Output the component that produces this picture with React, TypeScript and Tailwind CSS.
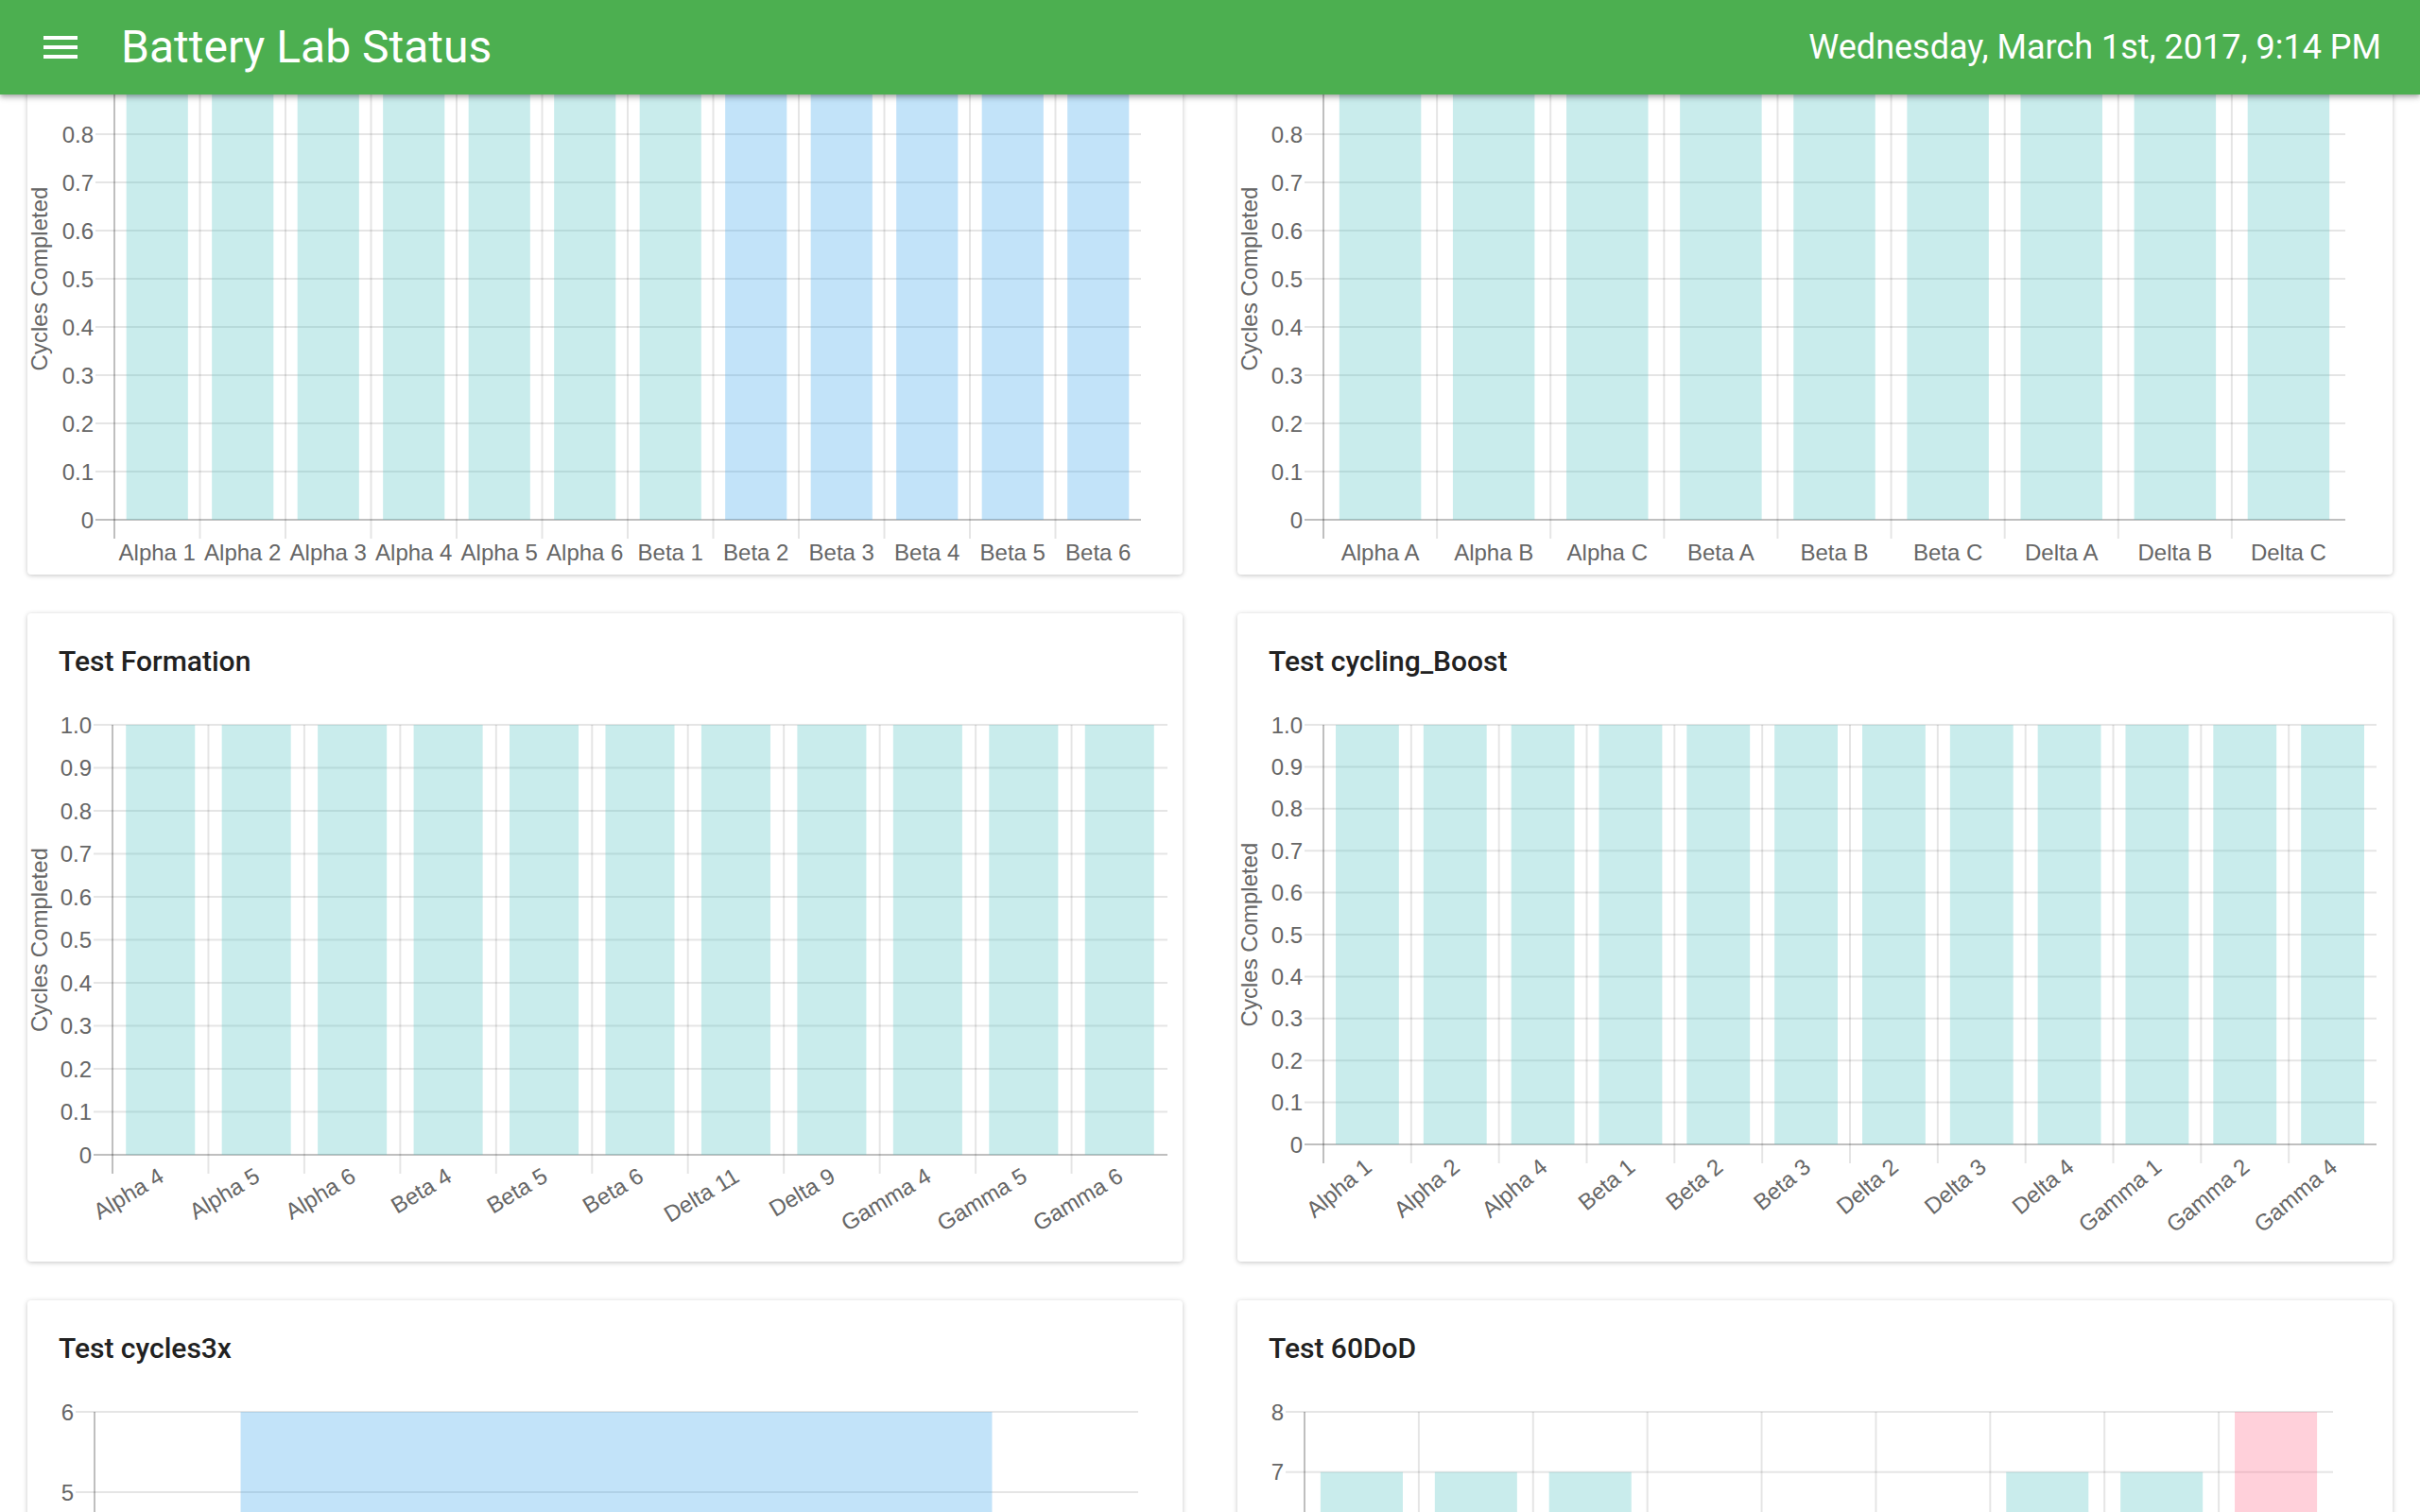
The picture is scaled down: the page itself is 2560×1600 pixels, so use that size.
import { useLayoutEffect, useRef } from "react";

const TEAL = "rgba(75,192,192,0.3)";
const BLUE = "rgba(54,162,235,0.3)";
const PINK = "rgba(255,99,132,0.3)";

const TITLE_H = 69;
const CARD_W = 1222;
const CARD_H = 686;

type Bar = { label: string; value: number; color: string };

type ChartSpec = {
  title: string;
  axisX: number;
  right: number;
  top: number;
  zero: number;
  max: number;
  step: number;
  decimals: number;
  rotate?: number;
  bars: Bar[];
};

const bars = (labels: string[], color: (i: number) => string, value: (i: number) => number = () => 1) =>
  labels.map((label, i) => ({ label, value: value(i), color: color(i) }));

const charts: ChartSpec[] = [
  {
    title: "Test cycling",
    axisX: 92,
    right: 1178,
    top: 118,
    zero: 628,
    max: 1,
    step: 0.1,
    decimals: 1,
    bars: bars(
      ["Alpha 1", "Alpha 2", "Alpha 3", "Alpha 4", "Alpha 5", "Alpha 6", "Beta 1", "Beta 2", "Beta 3", "Beta 4", "Beta 5", "Beta 6"],
      (i) => (i < 7 ? TEAL : BLUE)
    ),
  },
  {
    title: "Test storage",
    axisX: 91,
    right: 1172,
    top: 118,
    zero: 628,
    max: 1,
    step: 0.1,
    decimals: 1,
    bars: bars(
      ["Alpha A", "Alpha B", "Alpha C", "Beta A", "Beta B", "Beta C", "Delta A", "Delta B", "Delta C"],
      () => TEAL
    ),
  },
  {
    title: "Test Formation",
    axisX: 90,
    right: 1206,
    top: 118,
    zero: 573,
    max: 1,
    step: 0.1,
    decimals: 1,
    rotate: 31,
    bars: bars(
      ["Alpha 4", "Alpha 5", "Alpha 6", "Beta 4", "Beta 5", "Beta 6", "Delta 11", "Delta 9", "Gamma 4", "Gamma 5", "Gamma 6"],
      () => TEAL
    ),
  },
  {
    title: "Test cycling_Boost",
    axisX: 91,
    right: 1205,
    top: 118,
    zero: 562,
    max: 1,
    step: 0.1,
    decimals: 1,
    rotate: 40,
    bars: bars(
      ["Alpha 1", "Alpha 2", "Alpha 4", "Beta 1", "Beta 2", "Beta 3", "Delta 2", "Delta 3", "Delta 4", "Gamma 1", "Gamma 2", "Gamma 4"],
      () => TEAL
    ),
  },
  {
    title: "Test cycles3x",
    axisX: 71,
    right: 1175,
    top: 118,
    zero: 628,
    max: 6,
    step: 1,
    decimals: 0,
    bars: [{ label: "Beta 2", value: 6, color: BLUE }],
  },
  {
    title: "Test 60DoD",
    axisX: 71,
    right: 1159,
    top: 118,
    zero: 628,
    max: 8,
    step: 1,
    decimals: 0,
    bars: bars(
      ["Alpha 1", "Alpha 2", "Alpha 3", "Beta 1", "Beta 2", "Beta 3", "Delta 1", "Delta 2", "Gamma 1"],
      (i) => (i === 8 ? PINK : TEAL),
      (i) => [7, 7, 7, 5, 4, 5, 7, 7, 8][i]
    ),
  },
];

function BarChart({ c }: { c: ChartSpec }) {
  const n = c.bars.length;
  const cw = (c.right - c.axisX) / n;
  const steps = Math.round(c.max / c.step);
  const top = c.top - TITLE_H;
  const zero = c.zero - TITLE_H;
  const y = (v: number) => zero - (v / c.max) * (zero - top);
  const fmt = (i: number) => (i === 0 ? "0" : (i * c.step).toFixed(c.decimals));

  return (
    <svg
      width={CARD_W}
      height={CARD_H - TITLE_H}
      className="block shrink-0"
      fontFamily="'Liberation Sans', Arial, sans-serif"
      fontSize={24}
      fill="#666"
    >
      {/* horizontal grid + y ticks */}
      {Array.from({ length: steps + 1 }, (_, i) => {
        const yy = y(i * c.step);
        return (
          <g key={`h${i}`}>
            <line
              x1={c.axisX - 20}
              x2={c.right}
              y1={yy}
              y2={yy}
              stroke={i === 0 ? "rgba(0,0,0,0.25)" : "rgba(0,0,0,0.1)"}
              strokeWidth={2}
            />
            <text x={c.axisX - 22} y={yy + 8.5} textAnchor="end">
              {fmt(i)}
            </text>
          </g>
        );
      })}

      {/* vertical grid at category edges */}
      {c.bars.map((_, i) => (
        <line
          key={`v${i}`}
          x1={c.axisX + i * cw}
          x2={c.axisX + i * cw}
          y1={top}
          y2={zero + 20}
          stroke={i === 0 ? "rgba(0,0,0,0.25)" : "rgba(0,0,0,0.1)"}
          strokeWidth={2}
        />
      ))}

      {/* bars */}
      {c.bars.map((b, i) => (
        <rect
          key={`b${i}`}
          x={c.axisX + i * cw + 0.14 * cw}
          y={y(b.value)}
          width={0.72 * cw}
          height={zero - y(b.value)}
          fill={b.color}
        />
      ))}

      {/* x labels */}
      {c.bars.map((b, i) => {
        const cx = c.axisX + (i + 0.5) * cw;
        return c.rotate ? (
          <text
            key={`l${i}`}
            transform={`translate(${cx + 1} ${zero + 20}) rotate(${-c.rotate})`}
            textAnchor="end"
            dy="0.35em"
          >
            {b.label}
          </text>
        ) : (
          <text key={`l${i}`} x={cx} y={zero + 43} textAnchor="middle">
            {b.label}
          </text>
        );
      })}

      {/* axis title */}
      <text transform={`translate(21 ${(top + zero) / 2}) rotate(-90)`} textAnchor="middle">
        Cycles Completed
      </text>
    </svg>
  );
}

function Card({ c }: { c: ChartSpec }) {
  return (
    <section className="flex h-[686px] flex-col overflow-hidden rounded-[4px] bg-white shadow-[0_1px_6px_rgba(0,0,0,0.12),0_1px_4px_rgba(0,0,0,0.12)]">
      <h2 className="h-[69px] shrink-0 px-[33px] pt-[33px] text-[30px] font-medium leading-[36px] text-[#212121]">
        {c.title}
      </h2>
      <BarChart c={c} />
    </section>
  );
}

export default function App() {
  const mainRef = useRef<HTMLElement>(null);

  // the page is shown scrolled down past the first card titles
  useLayoutEffect(() => {
    if (mainRef.current) mainRef.current.scrollTop = 208;
  }, []);

  return (
    <div className="flex h-screen flex-col overflow-hidden bg-white font-['Roboto',sans-serif]">
      <header className="relative z-10 flex h-[100px] shrink-0 items-center bg-[#4caf50] pl-[40px] pr-[41px] text-white shadow-[0_2px_4px_-1px_rgba(0,0,0,0.2),0_4px_5px_0_rgba(0,0,0,0.14),0_1px_10px_0_rgba(0,0,0,0.12)]">
        <svg width="48" height="48" viewBox="0 0 24 24" fill="white">
          <path d="M3 18h18v-2H3v2zm0-5h18v-2H3v2zm0-7v2h18V6H3z" />
        </svg>
        <h1 className="ml-[40px] text-[48px] font-normal leading-none">Battery Lab Status</h1>
        <div className="ml-auto text-[36px] leading-none">Wednesday, March 1st, 2017, 9:14 PM</div>
      </header>

      <main ref={mainRef} className="min-h-0 flex-1 overflow-hidden">
        <div className="grid grid-cols-2 gap-x-[58px] gap-y-[41px] px-[29px] py-[30px]">
          {charts.map((c) => (
            <Card key={c.title} c={c} />
          ))}
        </div>
      </main>
    </div>
  );
}
